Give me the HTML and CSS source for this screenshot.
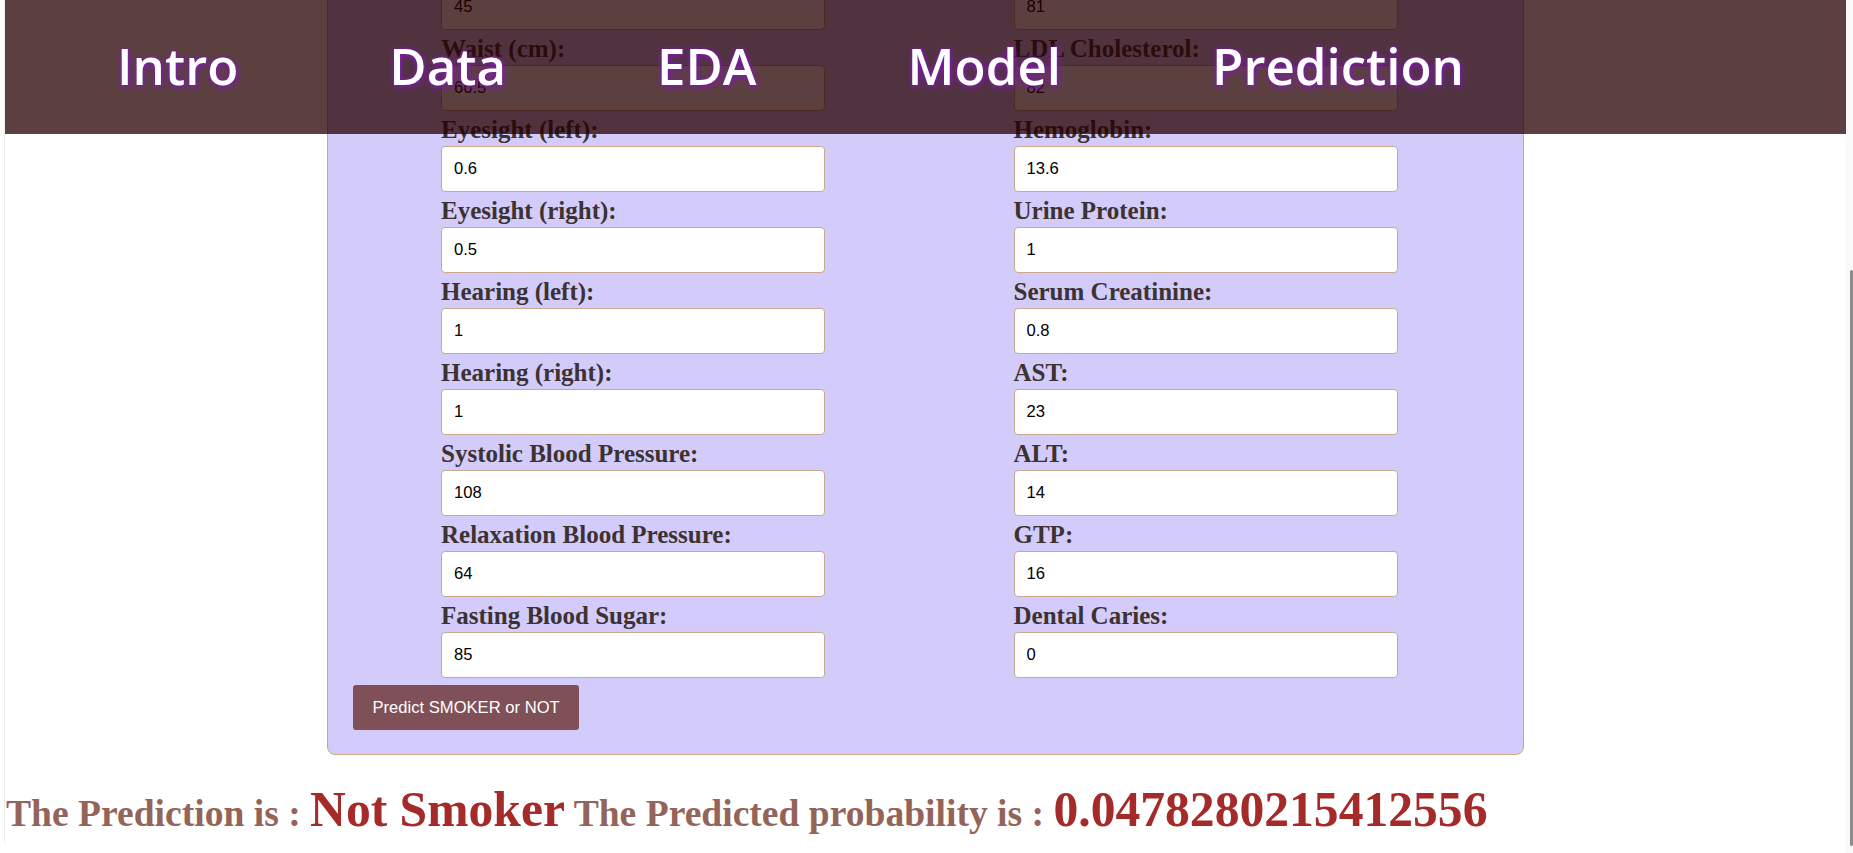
FILE: index.html
```html
<!DOCTYPE html>
<html lang="en">
<head>
<meta charset="utf-8">
<title>Smoker Prediction</title>
<link rel="stylesheet" href="styles.css">
</head>
<body>
<nav class="topnav">
  <a href="#intro" class="nav-link">Intro</a>
  <a href="#data" class="nav-link">Data</a>
  <a href="#eda" class="nav-link">EDA</a>
  <a href="#model" class="nav-link">Model</a>
  <a href="#prediction" class="nav-link">Prediction</a>
</nav>
<main class="page">
  <form class="predict-form">
    <div class="columns">
      <div class="col">
        <div class="field"><label>Age:</label><input type="text" value="40"></div>
        <div class="field"><label>Height (cm):</label><input type="text" value="155"></div>
        <div class="field"><label>Weight (kg):</label><input type="text" value="45"></div>
        <div class="field"><label>Waist (cm):</label><input type="text" value="66.5"></div>
        <div class="field"><label>Eyesight (left):</label><input type="text" value="0.6"></div>
        <div class="field"><label>Eyesight (right):</label><input type="text" value="0.5"></div>
        <div class="field"><label>Hearing (left):</label><input type="text" value="1"></div>
        <div class="field"><label>Hearing (right):</label><input type="text" value="1"></div>
        <div class="field"><label>Systolic Blood Pressure:</label><input type="text" value="108"></div>
        <div class="field"><label>Relaxation Blood Pressure:</label><input type="text" value="64"></div>
        <div class="field"><label>Fasting Blood Sugar:</label><input type="text" value="85"></div>
      </div>
      <div class="col">
        <div class="field"><label>Cholesterol:</label><input type="text" value="172"></div>
        <div class="field"><label>Triglyceride:</label><input type="text" value="43"></div>
        <div class="field"><label>HDL Cholesterol:</label><input type="text" value="81"></div>
        <div class="field"><label>LDL Cholesterol:</label><input type="text" value="82"></div>
        <div class="field"><label>Hemoglobin:</label><input type="text" value="13.6"></div>
        <div class="field"><label>Urine Protein:</label><input type="text" value="1"></div>
        <div class="field"><label>Serum Creatinine:</label><input type="text" value="0.8"></div>
        <div class="field"><label>AST:</label><input type="text" value="23"></div>
        <div class="field"><label>ALT:</label><input type="text" value="14"></div>
        <div class="field"><label>GTP:</label><input type="text" value="16"></div>
        <div class="field"><label>Dental Caries:</label><input type="text" value="0"></div>
      </div>
    </div>
    <button type="button" class="predict-btn">Predict SMOKER or NOT</button>
  </form>
  <p class="result">The Prediction is : <span class="big">Not Smoker</span> The Predicted probability is : <span class="big">0.0478280215412556</span></p>
</main>
<div class="scrollbar"><div class="thumb"></div></div>
</body>
</html>
```

FILE: styles.css
```css
html, body {
  margin: 0;
  padding: 0;
  background: #ffffff;
  overflow: hidden;
}

body {
  font-family: "Liberation Serif", "Times New Roman", serif;
  padding-left: 4px;
}

.topnav {
  position: fixed;
  top: 0;
  left: 5px;
  right: 7px;
  height: 134px;
  background: rgba(37, 0, 0, 0.75);
  display: flex;
  align-items: center;
  padding-left: 112px;
  gap: 151px;
  z-index: 10;
}

.nav-link {
  color: #ffffff;
  text-decoration: none;
  font-family: "Open Sans", "DejaVu Sans", sans-serif;
  font-weight: 600;
  font-size: 51px;
  line-height: 1;
  margin-top: -4px;
  text-shadow: 0 0 4px #7e1aa8, 1px 2px 6px #7e1aa8;
}

.page {
  border-left: 1px solid #ececec;
  padding: 0 8px 1px 1px;
  min-height: 900px;
}

.predict-form {
  box-sizing: border-box;
  width: 1197px;
  margin: -239px auto 0;
  background: #d3cbf9;
  border: 1px solid #c9a98b;
  border-radius: 8px;
  padding: 25px 25px 24px;
}

.columns {
  display: grid;
  grid-template-columns: 1fr 1fr;
}

.col {
  padding-left: 88px;
}

.field label {
  display: block;
  font-family: "Liberation Serif", "Times New Roman", serif;
  font-weight: bold;
  font-size: 25px;
  line-height: 28px;
  color: #3c3232;
  margin: 5px 0 2px;
}

.field input {
  display: block;
  box-sizing: border-box;
  width: 384px;
  height: 46px;
  margin: 0;
  border: 1px solid #c9a98b;
  border-radius: 4px;
  padding: 0 12px;
  background: #ffffff;
  color: #000000;
  font-family: "Liberation Sans", Arial, sans-serif;
  font-size: 16.6px;
}

.predict-btn {
  display: block;
  margin-top: 7px;
  height: 45px;
  padding: 0 19.5px;
  background: #7f5058;
  color: #ffffff;
  border: none;
  border-radius: 3px;
  font-family: "Liberation Sans", Arial, sans-serif;
  font-size: 16.6px;
}

.result {
  margin: 27px 0 0;
  font-family: "Liberation Serif", "Times New Roman", serif;
  font-weight: bold;
  font-size: 37.6px;
  line-height: 56px;
  color: #946459;
  white-space: nowrap;
}

.result .big {
  font-size: 49.6px;
  color: #a52a2a;
}

.scrollbar {
  position: fixed;
  top: 0;
  right: 0;
  bottom: 0;
  width: 7px;
  background: #fafafa;
  z-index: 20;
}

.scrollbar .thumb {
  position: absolute;
  right: 0;
  top: 270px;
  bottom: 7px;
  width: 3px;
  background: #8c8c8c;
  border-radius: 2px;
}
```
